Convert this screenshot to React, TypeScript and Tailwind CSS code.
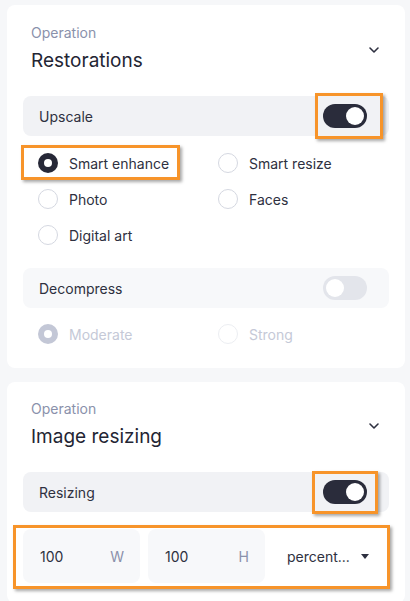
import React from "react";

const orange = "border-[3px] border-[#f7942a] shadow-[2px_2px_3px_rgba(0,0,0,0.35)]";

function Toggle({ on, className = "" }: { on: boolean; className?: string }) {
  return (
    <div
      className={`relative w-[44px] h-[24px] rounded-full flex items-center px-[3px] ${
        on ? "bg-[#2a2c3b] justify-end" : "bg-[#e3e5eb] justify-start"
      } ${className}`}
    >
      <div className="w-[18px] h-[18px] rounded-full bg-white" />
    </div>
  );
}

function Radio({ checked, disabled, label }: { checked?: boolean; disabled?: boolean; label: string }) {
  let circle;
  if (checked) {
    circle = (
      <div
        className={`w-[20px] h-[20px] rounded-full flex items-center justify-center ${
          disabled ? "bg-[#c3c7d6]" : "bg-[#262837]"
        }`}
      >
        <div className="w-[8px] h-[8px] rounded-full bg-white" />
      </div>
    );
  } else {
    circle = (
      <div
        className={`w-[20px] h-[20px] rounded-full border-[1.5px] ${
          disabled ? "border-[#eceef2]" : "border-[#d5d8e1]"
        } bg-white`}
      />
    );
  }
  return (
    <div className="flex items-center gap-[11px] h-9">
      {circle}
      <span className={`text-[14px] ${disabled ? "text-[#c5c9d7]" : "text-[#2e3040]"}`}>{label}</span>
    </div>
  );
}

function Chevron() {
  return (
    <svg width="12" height="8" viewBox="0 0 12 8" className="mt-[2px]">
      <path d="M2 2 L6 6 L10 2" fill="none" stroke="#2e3040" strokeWidth="1.6" strokeLinecap="round" strokeLinejoin="round" />
    </svg>
  );
}

function Header({ title }: { title: string }) {
  return (
    <div className="flex items-center justify-between px-2">
      <div className="flex flex-col">
        <span className="text-[14px] leading-5 text-[#8a91ab]">Operation</span>
        <span className="text-[19px] leading-[28px] mt-[4px] text-[#232533]">{title}</span>
      </div>
      <div className="mr-[1px]">
        <Chevron />
      </div>
    </div>
  );
}

export default function App() {
  return (
    <div
      className="w-[410px] h-[601px] overflow-hidden bg-[#f6f7f9] pt-[5px] pl-[7px] pr-[5px]"
      style={{ fontFamily: "Inter, 'Noto Sans', sans-serif" }}
    >
      {/* Card 1 */}
      <div className="bg-white rounded-lg px-4 pt-[18px] pb-[16px]">
        <Header title="Restorations" />
        <div className="mt-[21px] h-10 rounded-lg bg-[#f1f2f5] flex items-center justify-between pl-4 pr-[22px]">
          <span className="text-[14px] text-[#2e3040]">Upscale</span>
          <div className="relative">
            <Toggle on />
            <div className={`absolute left-[-8px] top-[-11px] w-[68px] h-[46px] ${orange}`} />
          </div>
        </div>
        <div className="mt-[9px] grid grid-cols-[180px_1fr] pl-[15px]">
          <div className="relative">
            <Radio checked label="Smart enhance" />
            <div className={`absolute left-[-17px] top-[0px] w-[159px] h-[35px] ${orange}`} />
          </div>
          <Radio label="Smart resize" />
          <Radio label="Photo" />
          <Radio label="Faces" />
          <Radio label="Digital art" />
        </div>
        <div className="mt-[15px] h-10 rounded-lg bg-[#f7f8fa] flex items-center justify-between pl-4 pr-[22px]">
          <span className="text-[14px] text-[#2e3040]">Decompress</span>
          <Toggle on={false} />
        </div>
        <div className="mt-2 grid grid-cols-[180px_1fr] pl-[15px]">
          <Radio checked disabled label="Moderate" />
          <Radio disabled label="Strong" />
        </div>
      </div>

      {/* Card 2 */}
      <div className="mt-[14px] bg-white rounded-lg px-4 pt-[17px] pb-[20px]">
        <Header title="Image resizing" />
        <div className="mt-[21px] h-10 rounded-lg bg-[#f1f2f5] flex items-center justify-between pl-4 pr-[22px]">
          <span className="text-[14px] text-[#2e3040]">Resizing</span>
          <div className="relative">
            <Toggle on />
            <div className={`absolute left-[-11px] top-[-9px] w-[66px] h-[43px] ${orange}`} />
          </div>
        </div>
        <div className="relative mt-[17px] flex items-center">
          <div className="w-[117px] h-[54px] rounded-lg bg-[#f7f8fa] flex items-center justify-between pl-[17px] pr-4">
            <span className="text-[14px] text-[#2e3040]">100</span>
            <span className="text-[14px] text-[#8a91ab]">W</span>
          </div>
          <div className="ml-2 w-[117px] h-[54px] rounded-lg bg-[#f7f8fa] flex items-center justify-between pl-[17px] pr-4">
            <span className="text-[14px] text-[#2e3040]">100</span>
            <span className="text-[14px] text-[#8a91ab]">H</span>
          </div>
          <div className="flex-1 h-[54px] flex items-center justify-between pl-[22px] pr-[20px]">
            <span className="text-[14px] text-[#2e3040]">percent...</span>
            <svg width="8" height="5" viewBox="0 0 8 5">
              <path d="M0 0 L8 0 L4 5 Z" fill="#2e3040" />
            </svg>
          </div>
          <div className={`absolute left-[-10px] top-[-4px] w-[377px] h-[64px] ${orange}`} />
        </div>
      </div>
    </div>
  );
}
